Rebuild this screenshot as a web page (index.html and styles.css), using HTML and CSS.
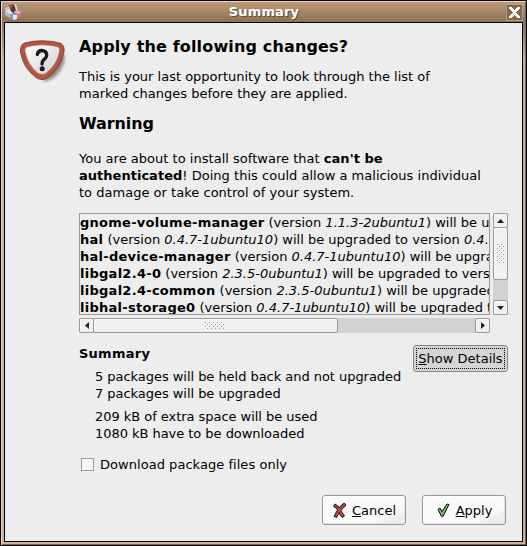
FILE: index.html
```html
<!DOCTYPE html>
<html lang="en">
<head>
<meta charset="utf-8">
<title>Summary</title>
<link rel="stylesheet" href="styles.css">
</head>
<body>
<div class="window">
  <header class="titlebar">
    <svg class="app-icon" width="18" height="18" viewBox="0 0 18 18">
      <path d="M4 3l6-2 3 2v6l-5 2-5-4z" fill="#463d3c"/>
      <path d="M1 5l4-2 2 4-2 2-4-2z" fill="#c9c6c4"/>
      <path d="M5 3l4-2 2 1-4 3z" fill="#a84b48"/>
      <path d="M10 1l2 0 2 6-2 1z" fill="#d6d3ce"/>
      <path d="M1 8l4-1 4 3v4l-3 1-5-3z" fill="#b4b9c8"/>
      <path d="M1 8l4-1 4 3-3 1z" fill="#e6e8ec"/>
      <path d="M10 9l3-2 4 2v4l-3 2-4-2z" fill="#cf7c80"/>
      <path d="M10 9l3-2 4 2-3 2z" fill="#efb5b5"/>
      <path d="M6 12l4-2 3 2v4l-3 1-4-1z" fill="#7f9cc0"/>
      <path d="M9 12l4 0v4l-4 1z" fill="#e2edf5"/>
    </svg>
    <h1 class="title">Summary</h1>
    <button class="close" aria-label="Close"><svg width="17" height="17" viewBox="0 0 17 17" shape-rendering="crispEdges"><path d="M3 3h3v1h1v1h1v1h1v-1h1v-1h1v-1h3v2h-1v1h-1v1h-1v1h-1v1h1v1h1v1h1v1h1v2h-3v-1h-1v-1h-1v-1h-1v1h-1v1h-1v1h-3v-2h1v-1h1v-1h1v-1h1v-1h-1v-1h-1v-1h-1v-1h-1z" fill="#fff"/></svg></button>
  </header>
  <main class="content">
    <svg class="question" width="52" height="48" viewBox="0 0 52 48">
      <defs>
        <filter id="soft" x="-30%" y="-30%" width="160%" height="160%"><feGaussianBlur stdDeviation="1.5"/></filter>
        <linearGradient id="face" x1="0" y1="0" x2="1" y2="1"><stop offset="0" stop-color="#fff"/><stop offset="1" stop-color="#cfcfcf"/></linearGradient>
      </defs>
      <path d="M30 12L45 15Q45 27 36 36Q29 42 23 41z" fill="#666" opacity=".7" filter="url(#soft)"/>
      <path d="M4.500 3Q22-1.500 40 3Q45 5 44 12Q41 28 28 37.500Q22 41.500 16 37.500Q3 28 .5 12Q0 5 4.500 3z" fill="#b9523f" stroke="#653a33" stroke-width=".8"/>
      <path d="M8 6.500Q22 3 37 6.500Q40.500 7.500 39.500 12Q37 25 26 33.500Q22 36 18 33.500Q7.500 25 5 12Q4 7.500 8 6.500z" fill="url(#face)" stroke="#94695f" stroke-width=".8"/>
      <path d="M17.300 14.500Q18 10.500 22 10.500Q26.700 11 26.700 15Q26.700 17.500 24 19.500Q22 21.500 22 24" fill="none" stroke="#171b1d" stroke-width="3.300" stroke-linecap="round"/>
      <circle cx="22.200" cy="28.800" r="2.500" fill="#171b1d"/>
    </svg>
    <div class="body">
      <h2>Apply the following changes?</h2>
      <p class="intro">This is your last opportunity to look through the list of<br>marked changes before they are applied.</p>
      <h2 class="warning">Warning</h2>
      <p class="caution">You are about to install software that <b>can't be</b><br><b>authenticated</b>! Doing this could allow a malicious individual<br>to damage or take control of your system.</p>
      <div class="scroller">
        <div class="list">
          <div><b>gnome-volume-manager</b> (version <i>1.1.3-2ubuntu1</i>) will be upgraded</div>
          <div><b>hal</b> (version <i>0.4.7-1ubuntu10</i>) will be upgraded to version <i>0.4.7</i></div>
          <div><b>hal-device-manager</b> (version <i>0.4.7-1ubuntu10</i>) will be upgraded</div>
          <div><b>libgal2.4-0</b> (version <i>2.3.5-0ubuntu1</i>) will be upgraded to version</div>
          <div><b>libgal2.4-common</b> (version <i>2.3.5-0ubuntu1</i>) will be upgraded to</div>
          <div><b>libhal-storage0</b> (version <i>0.4.7-1ubuntu10</i>) will be upgraded to</div>
        </div>
        <div class="bar vertical">
          <span class="step"><svg width="7" height="4" viewBox="0 0 7 4"><path d="M0 4L3.500 0 7 4z"/></svg></span>
          <span class="thumb"><svg class="grip" width="7" height="19" viewBox="0 0 7 19"><rect width="7" height="19" fill="url(#dots)"/></svg></span>
          <span class="trough"></span>
          <span class="step"><svg width="7" height="4" viewBox="0 0 7 4"><path d="M0 0L3.500 4 7 0z"/></svg></span>
        </div>
        <div class="bar horizontal">
          <span class="step"><svg width="4" height="7" viewBox="0 0 4 7"><path d="M4 0L0 3.500 4 7z"/></svg></span>
          <span class="thumb"><svg class="grip" width="19" height="7" viewBox="0 0 19 7" shape-rendering="crispEdges">
            <defs><pattern id="dots" width="4" height="4" patternUnits="userSpaceOnUse"><path d="M0 0h1v1h-1zM2 2h1v1h-1z" fill="#999"/><path d="M1 1h1v1h-1zM3 3h1v1h-1z" fill="#fff"/></pattern></defs>
            <rect width="19" height="7" fill="url(#dots)"/></svg></span>
          <span class="trough"></span>
          <span class="step"><svg width="4" height="7" viewBox="0 0 4 7"><path d="M0 0L4 3.500 0 7z"/></svg></span>
        </div>
      </div>
      <section class="summary">
        <div class="facts">
          <h3>Summary</h3>
          <p>5 packages will be held back and not upgraded<br>7 packages will be upgraded</p>
          <p>209 kB of extra space will be used<br>1080 kB have to be downloaded</p>
        </div>
        <button class="details"><span><u>S</u>how Details</span></button>
      </section>
      <label class="option"><span class="box"></span>Download package files only</label>
      <div class="actions">
        <button class="action"><svg width="13" height="15" viewBox="0 0 13 15"><path d="M2.500 3Q5 4.500 6.500 7.500Q8 11 9.500 12.500M11 2Q6 6 3 12.500" fill="none" stroke="#111" stroke-width="3.600" stroke-linecap="square"/><path d="M2.500 3Q5 4.500 6.500 7.500Q8 11 9.500 12.500M11 2Q6 6 3 12.500" fill="none" stroke="#c7444c" stroke-width="2" stroke-linecap="square"/></svg><span><u>C</u>ancel</span></button>
        <button class="action"><svg width="13" height="15" viewBox="0 0 13 15"><path d="M1 6.500L3 5 5 8.500 10 1 12 1.500 6 13.500H4.500z" fill="#78ad6b" stroke="#111"/></svg><span><u>A</u>pply</span></button>
      </div>
    </div>
  </main>
</div>
</body>
</html>
```
FILE: styles.css
```css
* { box-sizing: border-box; }
body { margin: 0; font: 13px/17px "DejaVu Sans", sans-serif; color: #000; white-space: nowrap; }
h1, h2, h3, p { margin: 0; }
button { padding: 0; font: inherit; color: inherit; }
svg { display: block; flex: none; }
u { text-decoration: underline 1px; text-underline-offset: 1px; text-decoration-skip-ink: none; }

.window {
  width: 527px; height: 546px; display: flex; flex-direction: column;
  border: 1px solid #000; padding: 1px 3px 3px;
  background: linear-gradient(#bd9a78, #8b7054 21px, #cfb29a 60px, #cfb29a);
  box-shadow: inset 1px 1px #f0d2b8, inset -1px -1px #7e6751;
}
.titlebar { height: 20px; flex: none; display: grid; grid-template-columns: 18px 1fr 17px; align-items: center; background: linear-gradient(#bd9a78, #8b7054); }
.title { font-size: 13px; line-height: 18px; letter-spacing: .15px; text-align: center; color: #fff; text-shadow: 1px 1px #0006; }
.close { width: 17px; height: 17px; border: 0; background: #80694f; box-shadow: inset 0 0 0 1px #b39c84; }
.content { flex: 1; display: flex; align-items: flex-start; background: #ededed; border: 1px solid #000; padding: 17px 13px 0 15px; }
.question { width: 52px; margin-right: 7px; }
.body { width: 429px; }
h2 { font-size: 16px; line-height: 19px; margin-top: -3px; letter-spacing: .15px; }
.intro { margin-top: 12px; }
h2.warning { margin-top: 12px; letter-spacing: -.1px; }
.caution { margin-top: 17px; letter-spacing: .02px; }

.scroller { margin-top: 12px; display: grid; grid-template-columns: 411px 15px; gap: 3px; }
.list { height: 102px; overflow: hidden; border: 1px solid #999; }
.list b { letter-spacing: .27px; }
.bar { display: flex; background: #d2d2d2; }
.vertical { flex-direction: column; height: 102px; }
.horizontal { height: 15px; }
.step, .thumb { display: grid; place-items: center; border: 1px solid #999; border-radius: 2px; background: #f0f0f0; box-shadow: inset 1px 1px #fafafa; flex: none; }
.step { width: 15px; height: 15px; fill: #222; }
.vertical .thumb { height: 53px; margin-top: -1px; }
.horizontal .thumb { width: 245px; margin-left: -1px; }
.horizontal .grip { margin-right: 2px; }
.trough { flex: 1; }

.summary { margin-top: 12px; display: flex; justify-content: space-between; align-items: flex-start; }
h3 { font-size: 13px; line-height: 17px; letter-spacing: .25px; }
.facts p { margin: 6px 0 0 16px; letter-spacing: -.04px; }
.details { width: 95px; height: 27px; border: 1px solid #888; border-radius: 3px; background: #d5d5d5; padding: 2px; }
.details span { display: block; height: 21px; line-height: 20px; border: 1px dotted #000; }
.option { margin: 14px 0 0 2px; display: flex; align-items: center; gap: 6px; letter-spacing: .04px; }
.box { width: 13px; height: 13px; border: 1px solid #999; background: #f6f6f6; }
.actions { margin: 22px 2px 0 0; display: flex; justify-content: flex-end; gap: 16px; }
.action { width: 84px; height: 30px; display: flex; align-items: center; justify-content: center; gap: 6px; padding-left: 1px; border: 1px solid #979797; border-radius: 3px; background: linear-gradient(155deg, #f9f9f9 75%, #ececec 85%); box-shadow: inset 1px 1px #fff, inset -1px -1px #e5e5e5; }
```
